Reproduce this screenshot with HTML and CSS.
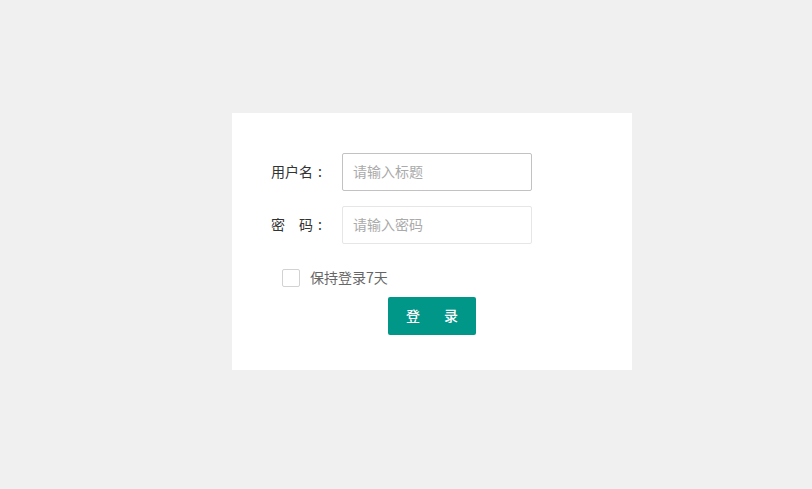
FILE: index.html
```html
<!DOCTYPE html>
<html lang="zh-CN">
<head>
<meta charset="utf-8">
<title>登录</title>
<link rel="stylesheet" href="styles.css">
</head>
<body>
<div class="card">
  <form class="form">
    <div class="form-item">
      <label class="label">用户名<span class="colon">:</span></label>
      <input class="input input-hover" type="text" placeholder="请输入标题">
    </div>
    <div class="form-item">
      <label class="label">密　码<span class="colon">:</span></label>
      <input class="input" type="password" placeholder="请输入密码">
    </div>
    <div class="check-row">
      <span class="check-box"></span>
      <span class="check-text">保持登录7天</span>
    </div>
    <div class="btn-row">
      <button type="button" class="btn"><span>登</span><span>录</span></button>
    </div>
  </form>
</div>
</body>
</html>
```
FILE: styles.css
```css
html, body {
  margin: 0;
  padding: 0;
}
body {
  background: #f0f0f0;
  font-family: "Noto Sans CJK SC", "Liberation Sans", sans-serif;
  font-size: 14px;
  color: #333;
  width: 812px;
  height: 489px;
  overflow: hidden;
}
.card {
  box-sizing: border-box;
  width: 400px;
  height: 257px;
  margin: 113px 0 0 232px;
  background: #fff;
  padding-top: 40px;
}
.form {
  margin: 0;
  display: flex;
  flex-direction: column;
}
.form-item {
  display: flex;
  align-items: center;
  height: 38px;
  margin-bottom: 15px;
}
.label {
  box-sizing: border-box;
  width: 110px;
  padding-right: 15px;
  padding-bottom: 2px;
  text-align: right;
  line-height: 20px;
  color: #333;
}
.colon {
  display: inline-block;
  width: 14px;
  text-align: center;
}
.input {
  box-sizing: border-box;
  width: 190px;
  height: 38px;
  border: 1px solid #e6e6e6;
  border-radius: 2px;
  padding: 0 10px 2px;
  font-family: inherit;
  font-size: 14px;
  color: #333;
  outline: none;
  background: #fff;
}
.input-hover {
  border-color: #c2c2c2;
}
.input::placeholder {
  color: #aaa;
}
.check-row {
  display: flex;
  align-items: center;
  height: 18px;
  margin: 10px 0 10px 50px;
}
.check-box {
  box-sizing: border-box;
  width: 18px;
  height: 18px;
  border: 1px solid #d2d2d2;
  border-radius: 2px;
  background: #fff;
}
.check-text {
  margin-left: 10px;
  margin-bottom: 2px;
  color: #666;
  line-height: 18px;
}
.btn-row {
  display: flex;
  justify-content: center;
}
.btn {
  box-sizing: border-box;
  width: 88px;
  height: 38px;
  border: none;
  border-radius: 2px;
  background: #009688;
  color: #fff;
  font-family: inherit;
  font-size: 14px;
  font-weight: 500;
  display: flex;
  align-items: center;
  justify-content: center;
  gap: 24px;
  padding: 0 0 2px;
}
```
